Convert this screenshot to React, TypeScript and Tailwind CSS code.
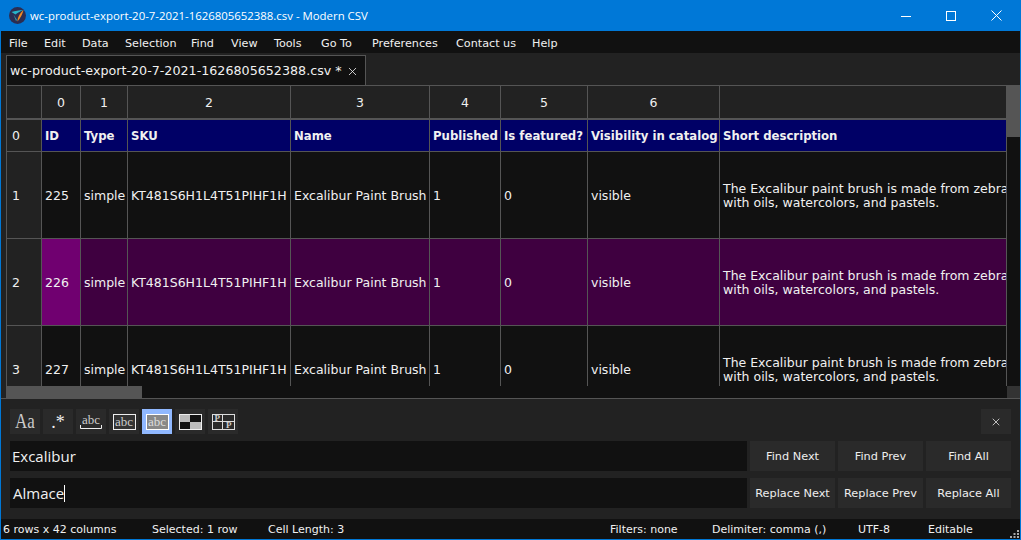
import { X } from "lucide-react";

const dejavu = "font-['DejaVu_Sans',sans-serif]";
const gridCols = "grid grid-cols-[36px_39px_47px_163px_139px_71px_87px_132px_287px]";
const menus = [
  { label: "File", w: "w-[35px]" },
  { label: "Edit", w: "w-[38px]" },
  { label: "Data", w: "w-[43px]" },
  { label: "Selection", w: "w-[66px]" },
  { label: "Find", w: "w-[40px]" },
  { label: "View", w: "w-[43px]" },
  { label: "Tools", w: "w-[47px]" },
  { label: "Go To", w: "w-[51px]" },
  { label: "Preferences", w: "w-[84px]" },
  { label: "Contact us", w: "w-[76px]" },
  { label: "Help", w: "w-[40px]" },
];
const headers = ["ID", "Type", "SKU", "Name", "Published", "Is featured?", "Visibility in catalog", "Short description"];

const rows = [
  { n: "1", id: "225" },
  { n: "2", id: "226" },
  { n: "3", id: "227" },
];

const Logo = () => (
  <svg width="17" height="17" viewBox="0 0 17 17">
    <circle cx="8.5" cy="8.5" r="8.5" fill="#2b2d52" />
    <path d="M2.5 5 C6 3.5 10 3.5 14.5 3 C10 5 8 6 6.5 7.5 Z" fill="#27b5c9" />
    <path d="M14.5 3 C13.5 7 11.5 11 8.5 14.5 C8.5 11 10 7 14.5 3 Z" fill="#f08a24" />
    <path d="M4.5 7.5 L8 13 L7 14 Z" fill="#2fa0a8" />
  </svg>
);

const WindowButtons = () => (
  <div className="ml-auto mr-[19px] flex items-center gap-[35px]">
    <svg width="10" height="10" viewBox="0 0 10 10" stroke="white" fill="none">
      <path d="M0 5.5H10" />
    </svg>
    <svg width="10" height="10" viewBox="0 0 10 10" stroke="white" fill="none">
      <rect x="0.5" y="0.5" width="9" height="9" />
    </svg>
    <svg width="11" height="11" viewBox="0 0 11 11" stroke="white" fill="none">
      <path d="M0.5 0.5L10.5 10.5M10.5 0.5L0.5 10.5" />
    </svg>
  </div>
);

const Cell = ({ bg, children }: { bg: string; children: React.ReactNode }) => (
  <div className={`flex h-[87px] items-center overflow-hidden whitespace-nowrap border-r border-b border-[#555555] pl-[3px] pt-[3px] ${bg}`}>{children}</div>
);

const DataRow = ({ n, id, selected }: { n: string; id: string; selected?: boolean }) => {
  const bg = selected ? "bg-[#3f0040]" : "bg-[#111111]";
  return (
    <div className={gridCols}>
      <div className="flex h-[87px] items-center border-x border-b border-[#555555] bg-[#222222] pl-[5px] pt-[3px]">{n}</div>
      <Cell bg={selected ? "bg-[#700070]" : bg}>{id}</Cell>
      <Cell bg={bg}>simple</Cell>
      <Cell bg={bg}>KT481S6H1L4T51PIHF1H</Cell>
      <Cell bg={bg}>Excalibur Paint Brush</Cell>
      <Cell bg={bg}>1</Cell>
      <Cell bg={bg}>0</Cell>
      <Cell bg={bg}>visible</Cell>
      <div className={`flex h-[87px] items-center overflow-hidden whitespace-nowrap border-r border-b border-[#555555] pl-[3px] pt-px leading-[14px] ${bg}`}>
        <div>
          The Excalibur paint brush is made from zebra
          <br />
          with oils, watercolors, and pastels.
        </div>
      </div>
    </div>
  );
};

const ToolButton = ({ children, active }: { children: React.ReactNode; active?: boolean }) => (
  <div className={`flex h-[25px] w-[30px] items-center justify-center font-['Liberation_Serif',serif] text-[#cccccc] ${active ? "bg-[#90b8ff]" : "bg-[#2a2a2a]"}`}>
    {children}
  </div>
);

const ActionButton = ({ label }: { label: string }) => (
  <div className="flex h-[30px] w-[85px] items-center justify-center bg-[#2a2a2a] pt-[2px] text-[11.3px] text-[#eeeeee]">{label}</div>
);

export default function App() {
  return (
    <div className={`flex h-[540px] w-[1021px] flex-col overflow-hidden border-x border-b border-[#0078d7] bg-[#222222] text-[12.5px] text-[#f0f0f0] ${dejavu}`}>
      <div className="-mx-px flex h-[31px] shrink-0 items-center bg-[#0078d7] pl-[9px] text-white">
        <Logo />
        <span className="ml-[4px] font-['Open_Sans',sans-serif] text-[11.4px]">wc-product-export-20-7-2021-1626805652388.csv - Modern CSV</span>
        <WindowButtons />
      </div>

      <div className="flex h-[22px] shrink-0 items-center bg-[#111111] pl-[8px] pt-[5px] text-[11.2px]">
        {menus.map((m) => (
          <span key={m.label} className={m.w}>
            {m.label}
          </span>
        ))}
      </div>

      <div className="flex h-[32px] shrink-0 items-end pl-[5px]">
        <div className="flex h-[30px] w-[360px] items-center whitespace-nowrap border-x border-t border-[#555555] bg-[#111111] pl-[3px] pt-px text-[12.7px]">
          wc-product-export-20-7-2021-1626805652388.csv *
          <X size={13} strokeWidth={1.5} className="ml-[4px]" />
        </div>
      </div>

      <div className="flex h-[314px] shrink-0 border-b border-[#555555] pl-[5px]">
        <div className="flex w-[1001px] shrink-0 flex-col">
          <div className="h-[301px] overflow-hidden">
            <div className={gridCols}>
              <div className="h-[34px] border-x border-y border-[#555555]" />
              {["0", "1", "2", "3", "4", "5", "6", ""].map((c, i) => (
                <div key={i} className="flex h-[34px] items-center justify-center border-y border-r border-[#555555] pt-[2px]">
                  {c}
                </div>
              ))}
            </div>
            <div className={gridCols}>
              <div className="flex h-[33px] items-center border-x border-y border-[#555555] pl-[5px] pt-[2px]">0</div>
              {headers.map((h) => (
                <div key={h} className="flex h-[33px] items-center overflow-hidden whitespace-nowrap border-y border-r border-[#555555] bg-[#000066] pl-[3px] pt-[2px] text-[11.7px] font-bold">
                  {h}
                </div>
              ))}
            </div>
            {rows.map((r) => (
              <DataRow key={r.n} n={r.n} id={r.id} selected={r.n === "2"} />
            ))}
          </div>
          <div className="h-[12px] bg-[#111111]">
            <div className="h-full w-[136px] bg-[#555555]" />
          </div>
        </div>
        <div className="flex w-[13px] shrink-0 flex-col bg-[#111111]">
          <div className="h-[52px] bg-[#555555]" />
          <div className="mt-auto h-[12px] bg-[#333333]" />
        </div>
      </div>

      <div className="flex flex-1 flex-col gap-[7px] px-[9px] pt-[10px]">
        <div className="flex h-[25px] gap-[3px]">
          <ToolButton>
            <span className="scale-y-[1.2] text-[17px] leading-none">Aa</span>
          </ToolButton>
          <ToolButton>
            <span className="text-lg leading-none text-[#eeeeee]">.*</span>
          </ToolButton>
          <ToolButton>
            <div className="flex flex-col items-center">
              <span className="text-[13px] leading-[11px]">abc</span>
              <svg width="22" height="4" viewBox="0 0 22 4" fill="none" stroke="#eeeeee">
                <path d="M0.5 0V3.5H21.5V0" />
              </svg>
            </div>
          </ToolButton>
          <ToolButton>
            <span className="h-[16px] w-[23px] border border-[#eeeeee] bg-[#333333] text-center text-[13px] leading-[14px]">abc</span>
          </ToolButton>
          <ToolButton active>
            <span className="h-[16px] w-[23px] border border-white bg-[#888888] text-center text-[13px] leading-[14px] text-[#dddddd]">abc</span>
          </ToolButton>
          <ToolButton>
            <div className="grid h-[16px] w-[23px] grid-cols-2 grid-rows-2 border border-[#eeeeee]">
              <div className="bg-[#bbbbbb]" />
              <div className="bg-[#111111]" />
              <div className="bg-[#111111]" />
              <div className="bg-[#bbbbbb]" />
            </div>
          </ToolButton>
          <ToolButton>
            <div className="grid h-[16px] w-[23px] grid-cols-2 grid-rows-2 border border-[#dddddd] text-[9px] leading-[7px] font-bold">
              <div className="border-r border-b border-[#dddddd] pl-[2px]">P</div>
              <div className="border-b border-[#dddddd]" />
              <div className="border-r border-[#dddddd]" />
              <div className="pl-[3px]">P</div>
            </div>
          </ToolButton>
          <div className="ml-auto flex h-[25px] w-[30px] items-center justify-center bg-[#2a2a2a]">
            <X size={12} strokeWidth={1.5} />
          </div>
        </div>

        <div className="flex h-[30px] gap-[3px]">
          <div className="flex w-[737px] items-center bg-[#111111] pl-[2px] font-['Open_Sans',sans-serif] text-[15px]">Excalibur</div>
          <ActionButton label="Find Next" />
          <ActionButton label="Find Prev" />
          <ActionButton label="Find All" />
        </div>
        <div className="flex h-[30px] gap-[3px]">
          <div className="flex w-[737px] items-center bg-[#111111] pl-[3px] font-['Open_Sans',sans-serif] text-[15px]">
            Almace
            <span className="h-[17px] w-px bg-white" />
          </div>
          <ActionButton label="Replace Next" />
          <ActionButton label="Replace Prev" />
          <ActionButton label="Replace All" />
        </div>
      </div>

      <div className="relative flex h-[20px] shrink-0 items-center bg-[#111111] pl-[2px] pt-[3px] text-[11px]">
        <span className="w-[149px]">6 rows x 42 columns</span>
        <span className="w-[116px]">Selected: 1 row</span>
        <span className="w-[342px]">Cell Length: 3</span>
        <span className="w-[102px]">Filters: none</span>
        <span className="w-[146px]">Delimiter: comma (,)</span>
        <span className="w-[70px]">UTF-8</span>
        <span>Editable</span>
        <svg className="absolute right-[1px] bottom-[1px]" width="9" height="8" viewBox="0 0 9 8" fill="#aaaaaa">
          <rect x="7" y="0" width="2" height="2" />
          <rect x="3.5" y="3" width="2" height="2" />
          <rect x="7" y="3" width="2" height="2" />
          <rect x="0" y="6" width="2" height="2" />
          <rect x="3.5" y="6" width="2" height="2" />
          <rect x="7" y="6" width="2" height="2" />
        </svg>
      </div>
    </div>
  );
}
